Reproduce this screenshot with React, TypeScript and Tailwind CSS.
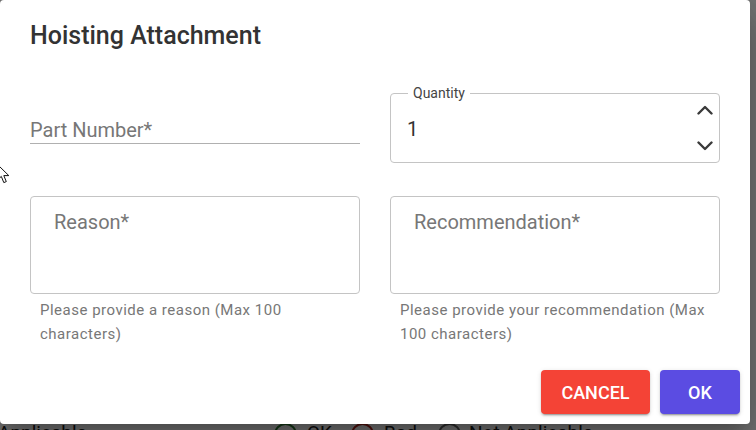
import React from "react";

function ChevronUp() {
  return (
    <svg width="16" height="10" viewBox="0 0 16 10" fill="none">
      <polyline points="1.5,8.5 8,2 14.5,8.5" stroke="#3a3a3a" strokeWidth="2.4" strokeLinecap="round" strokeLinejoin="round" />
    </svg>
  );
}
function ChevronDown() {
  return (
    <svg width="16" height="10" viewBox="0 0 16 10" fill="none">
      <polyline points="1.5,1.5 8,8 14.5,1.5" stroke="#3a3a3a" strokeWidth="2.4" strokeLinecap="round" strokeLinejoin="round" />
    </svg>
  );
}

function Cursor() {
  return (
    <svg className="absolute left-[-3px] top-[164px]" width="14" height="22" viewBox="0 0 14 22">
      <path d="M0.5 0.5 L0.5 16 L4.3 12.4 L6.8 18.6 L9.3 17.6 L6.8 11.6 L11.8 11.6 Z" fill="#fff" stroke="#111" strokeWidth="1" strokeLinejoin="miter" />
    </svg>
  );
}

export default function App() {
  return (
    <div className="relative w-[756px] h-[430px] overflow-hidden bg-white" style={{ fontFamily: "Roboto, 'Liberation Sans', sans-serif" }}>
      {/* page behind the dialog */}
      <div className="absolute left-0 top-[422px] w-full flex items-start text-[19px] leading-[22px] text-[#222]">
        <span className="ml-[-2px] w-[276px] whitespace-nowrap">Applicable</span>
        <span className="shrink-0 mt-[1px] w-[23px] h-[23px] rounded-full border-2 border-[#2e7d32]"></span>
        <span className="ml-[10px] w-[44px] whitespace-nowrap">OK</span>
        <span className="shrink-0 mt-[1px] w-[23px] h-[23px] rounded-full border-2 border-[#b3261e]"></span>
        <span className="ml-[10px] w-[54px] whitespace-nowrap">Bad</span>
        <span className="shrink-0 mt-[1px] w-[23px] h-[23px] rounded-full border-2 border-[#666]"></span>
        <span className="ml-[8px] whitespace-nowrap">Not Applicable</span>
      </div>
      <div className="absolute inset-0 bg-black/55"></div>

      {/* dialog */}
      <div className="absolute left-0 top-0 w-[750px] h-[424px] bg-white rounded-[4px] shadow-[0_11px_15px_-7px_rgba(0,0,0,0.2),0_24px_38px_3px_rgba(0,0,0,0.14),0_9px_46px_8px_rgba(0,0,0,0.12)] flex flex-col">
        <h2 className="pl-[30px] pt-[19px] text-[25px] leading-[33px] font-medium text-[#333]">Hoisting Attachment</h2>

        <div className="mt-[41px] px-[30px] grid grid-cols-[330px_330px] gap-x-[30px] gap-y-[33px]">
          {/* Part number */}
          <div className="pt-[25px]">
            <div className="pb-[1px] border-b border-[#b0b0b0] text-[20px] leading-[24px] text-[#777]">Part Number*</div>
          </div>

          {/* Quantity */}
          <div className="relative h-[70px] border border-[#c4c4c4] rounded-[4px] flex items-center justify-between">
            <span className="absolute left-[17px] top-[-9px] px-[5px] bg-white text-[14px] leading-[16px] text-[#444]">Quantity</span>
            <span className="pl-[16px] pt-[1px] text-[20px] leading-[24px] text-[#333]">1</span>
            <div className="pr-[6px] flex flex-col items-center gap-[26px]">
              <ChevronUp />
              <ChevronDown />
            </div>
          </div>

          {/* Reason */}
          <div>
            <div className="h-[98px] border border-[#c4c4c4] rounded-[4px] pt-[13px] pl-[23px] text-[20px] leading-[24px] text-[#777]">Reason*</div>
            <div className="mt-[4px] pl-[10px] text-[15px] leading-[24px] tracking-[0.5px] text-[#777]">
              <div className="whitespace-nowrap">Please provide a reason (Max 100</div>
              <div className="whitespace-nowrap">characters)</div>
            </div>
          </div>

          {/* Recommendation */}
          <div>
            <div className="h-[98px] border border-[#c4c4c4] rounded-[4px] pt-[13px] pl-[23px] text-[20px] leading-[24px] text-[#777]">Recommendation*</div>
            <div className="mt-[4px] pl-[10px] text-[15px] leading-[24px] tracking-[0.5px] text-[#777]">
              <div className="whitespace-nowrap">Please provide your recommendation (Max</div>
              <div className="whitespace-nowrap">100 characters)</div>
            </div>
          </div>
        </div>

        <div className="mt-auto pb-[10px] pr-[10px] flex justify-end gap-[10px]">
          <button className="w-[109px] h-[44px] rounded-[4px] bg-[#f44336] text-white text-[18px] font-medium shadow-[0_3px_1px_-2px_rgba(0,0,0,0.2),0_2px_2px_0_rgba(0,0,0,0.14),0_1px_5px_0_rgba(0,0,0,0.12)]">CANCEL</button>
          <button className="w-[80px] h-[44px] rounded-[4px] bg-[#5b4ce2] text-white text-[18px] font-medium shadow-[0_3px_1px_-2px_rgba(0,0,0,0.2),0_2px_2px_0_rgba(0,0,0,0.14),0_1px_5px_0_rgba(0,0,0,0.12)]">OK</button>
        </div>
      </div>
      <Cursor />
    </div>
  );
}
